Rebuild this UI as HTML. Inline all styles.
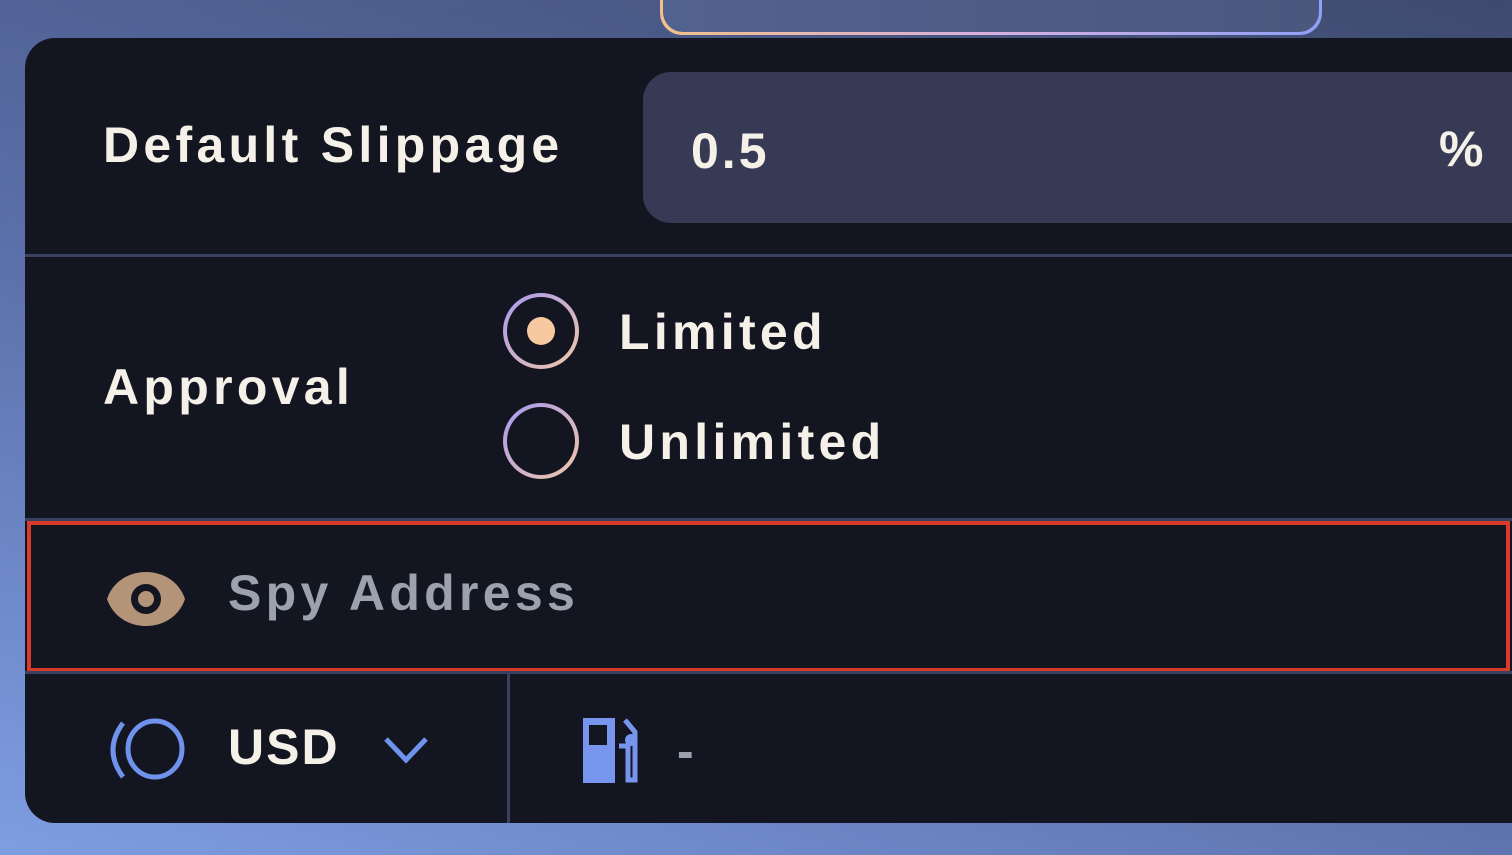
<!DOCTYPE html>
<html><head><style>
body{margin:0;width:1512px;height:855px;overflow:hidden;background:linear-gradient(20deg,#7e9ee2 0%,#5a6ea8 45%,#3e4a6e 100%);font-family:"Liberation Sans",sans-serif;position:relative}
.top{position:absolute;left:660px;top:-30px;width:662px;height:65px;border-radius:22px;background:linear-gradient(90deg,#f3c08a,#d8b0e0,#8ea0f8);}
.top::after{content:"";position:absolute;left:3px;top:0;right:3px;bottom:3px;border-radius:20px;background:linear-gradient(90deg,#52628e,#4a587e)}
.card{position:absolute;left:25px;top:38px;width:1520px;height:785px;background:#131620;border-radius:30px;overflow:hidden}
.t{position:absolute;color:#f6f1e8;font-weight:bold;letter-spacing:4.3px}
.inp{position:absolute;left:618px;top:34px;width:900px;height:151px;background:#363a54;border-radius:28px}
.hl{position:absolute;left:0;width:1520px;height:3px;background:#3a4160}
.radio{position:absolute;width:76px;height:76px;border-radius:50%;background:linear-gradient(135deg,#a898f0,#f0c8a8)}
.radio::after{content:"";position:absolute;left:4px;top:4px;width:68px;height:68px;border-radius:50%;background:#131620}
.dot{position:absolute;width:28px;height:28px;border-radius:50%;background:#f6c9a0;z-index:2}
</style></head><body>
<div class="top"></div>
<div class="card">
  <div class="t" style="left:78px;top:78px;font-size:50px">Default Slippage</div>
  <div class="inp"></div>
  <div class="t" style="left:666px;top:84px;font-size:50px;letter-spacing:3px">0.5</div>
  <div class="t" style="left:1414px;top:82px;font-size:50px;letter-spacing:0">%</div>
  <div class="hl" style="top:216px"></div>
  <div class="t" style="left:78px;top:320px;font-size:50px">Approval</div>
  <div class="radio" style="left:478px;top:255px"></div>
  <div class="dot" style="left:502px;top:279px"></div>
  <div class="t" style="left:594px;top:265px;font-size:50px">Limited</div>
  <div class="radio" style="left:478px;top:365px"></div>
  <div class="t" style="left:594px;top:375px;font-size:50px">Unlimited</div>
  <div class="hl" style="top:480px"></div>
  <div style="position:absolute;left:2px;top:483px;width:1475px;height:143px;border:4px solid #d93a2a"></div>
  <svg style="position:absolute;left:80px;top:531px" width="82" height="60" viewBox="0 0 82 60"><path d="M2 30 C14 -6 68 -6 80 30 C68 66 14 66 2 30Z" fill="#b49478"/><circle cx="41" cy="30" r="15" fill="#131620"/><circle cx="41" cy="30" r="8" fill="#b49478"/></svg>
  <div class="t" style="left:203px;top:526px;font-size:50px;color:#9ba1ad">Spy Address</div>
  <div class="hl" style="top:633px"></div>
  <div style="position:absolute;left:482px;top:636px;width:3px;height:160px;background:#3a4160"></div>
  <svg style="position:absolute;left:80px;top:680px" width="82" height="64" viewBox="0 0 82 64"><path d="M18 5 Q-2 32 18 59" fill="none" stroke="#6f92ec" stroke-width="5"/><ellipse cx="50" cy="31" rx="27" ry="28" fill="none" stroke="#6f92ec" stroke-width="5"/></svg>
  <div class="t" style="left:203px;top:680px;font-size:50px;letter-spacing:2px">USD</div>
  <svg style="position:absolute;left:358px;top:696px" width="46" height="32" viewBox="0 0 46 32"><path d="M3 5 L23 26 L43 5" fill="none" stroke="#6f92ec" stroke-width="5"/></svg>
  <svg style="position:absolute;left:556px;top:678px" width="64" height="68" viewBox="0 0 64 68"><path d="M2 2 H34 V67 H2Z" fill="#7795ec"/><rect x="8" y="9" width="18" height="20" fill="#131620"/><path d="M44 4 L54 16 V64 H47 V30 H38" fill="none" stroke="#7795ec" stroke-width="5"/><circle cx="50" cy="24" r="6" fill="#7795ec"/></svg>
  <div class="t" style="left:652px;top:684px;font-size:50px;color:#9ba1ad">-</div>
</div>
</body></html>
